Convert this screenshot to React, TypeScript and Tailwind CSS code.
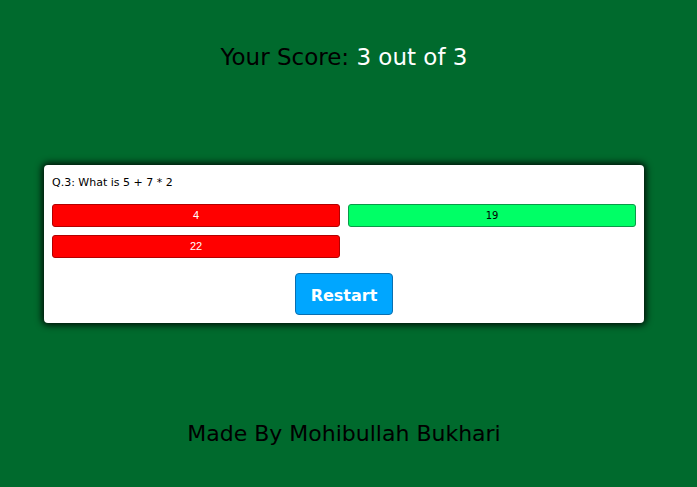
export default function App() {
  const font = { fontFamily: '"Comic Sans MS", "DejaVu Sans", sans-serif' };
  return (
    <div className="w-[697px] h-[487px] bg-[#006a2d] overflow-hidden" style={font}>
      <div className="w-[688px] flex flex-col items-center">
        <h1 className="mt-[42px] text-[23px] leading-[30px] text-black font-normal">
          Your Score: <span className="text-white">3 out of 3</span>
        </h1>
        <div className="mt-[93px] w-[600px] bg-white rounded-[4px] shadow-[0_0_7px_2px_rgba(0,0,0,0.9)] px-2 pt-[10px] pb-2">
          <p className="text-[11px] leading-[16px] text-black">Q.3: What is 5 + 7 * 2</p>
          <div className="mt-[13px] grid grid-cols-2 gap-2">
            <button className="h-[23px] rounded-[3px] bg-[#ff0000] border border-[#b30000] text-white text-[11px]" style={{ fontFamily: '"Liberation Sans", Arial, sans-serif' }}>4</button>
            <button className="h-[23px] rounded-[3px] bg-[#00ff66] border border-[#0a9a4a] text-black text-[10px]">19</button>
            <button className="h-[23px] rounded-[3px] bg-[#ff0000] border border-[#b30000] text-white text-[11px]" style={{ fontFamily: '"Liberation Sans", Arial, sans-serif' }}>22</button>
          </div>
          <div className="mt-[15px] flex justify-center">
            <button className="w-[98px] h-[42px] pt-[4px] rounded-[4px] bg-[#00a6ff] border border-[#0a6fb0] text-white text-[16px] font-bold">Restart</button>
          </div>
        </div>
        <p className="mt-[96px] text-[22px] leading-[30px] text-black">Made By Mohibullah Bukhari</p>
      </div>
    </div>
  );
}
